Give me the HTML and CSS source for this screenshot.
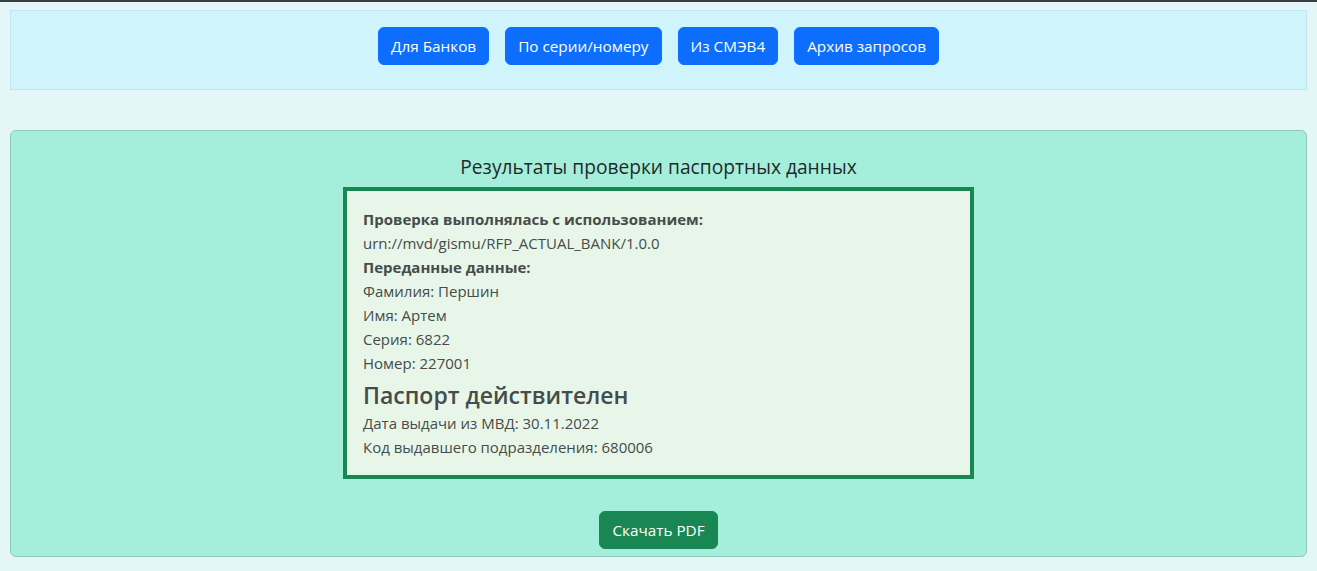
FILE: index.html
```html
<!DOCTYPE html>
<html lang="ru">
<head>
<meta charset="utf-8">
<title>Проверка паспорта</title>
<link rel="stylesheet" href="styles.css">
</head>
<body>
<div class="page">
  <nav class="nav-box">
    <button class="btn btn-primary">Для Банков</button>
    <button class="btn btn-primary">По серии/номеру</button>
    <button class="btn btn-primary">Из СМЭВ4</button>
    <button class="btn btn-primary">Архив запросов</button>
  </nav>
  <section class="card">
    <h5 class="card-title">Результаты проверки паспортных данных</h5>
    <div class="result">
      <div class="line strong">Проверка выполнялась с использованием:</div>
      <div class="line">urn://mvd/gismu/RFP_ACTUAL_BANK/1.0.0</div>
      <div class="line strong">Переданные данные:</div>
      <div class="line">Фамилия: Першин</div>
      <div class="line">Имя: Артем</div>
      <div class="line">Серия: 6822</div>
      <div class="line">Номер: 227001</div>
      <h4 class="verdict">Паспорт действителен</h4>
      <div class="line">Дата выдачи из МВД: 30.11.2022</div>
      <div class="line">Код выдавшего подразделения: 680006</div>
    </div>
    <button class="btn btn-success">Скачать PDF</button>
  </section>
</div>
</body>
</html>
```
FILE: styles.css
```css
* { box-sizing: border-box; }
html, body { margin: 0; padding: 0; }
body {
  background: #e5f6f9;
  border-top: 2px solid #3a3f44;
  font-family: "Open Sans", "Noto Sans", sans-serif;
  color: #212529;
  min-height: 571px;
}
.page {
  padding: 8px 10px 0 10px;
  display: flex;
  flex-direction: column;
  gap: 40px;
}
.nav-box {
  background: #cff4fc;
  border: 1px solid #bfe6ee;
  padding: 16px 0 24px;
  display: flex;
  justify-content: center;
  gap: 16px;
}
.btn {
  font-family: inherit;
  font-size: 15.3px;
  line-height: 24px;
  padding: 6px 12px;
  border: 1px solid transparent;
  border-radius: 6px;
  color: #fff;
  cursor: pointer;
  height: 38px;
}
.btn-primary { background: #0d6efd; border-color: #0d6efd; }
.btn-success { background: #198754; border-color: #198754; }
.card {
  background: #a6eedc;
  border: 1px solid #8cc9b9;
  border-radius: 6px;
  padding: 24px 0 7px;
  display: flex;
  flex-direction: column;
  align-items: center;
}
.card-title {
  margin: 0 0 8px;
  font-size: 19.2px;
  font-weight: 500;
  line-height: 24px;
  color: #1f2a27;
}
.result {
  width: 631px;
  border: 4px solid #198754;
  background: #e8f6ea;
  padding: 16px;
  color: #454c49;
  font-size: 15px;
  line-height: 24px;
}
.line.strong { font-weight: 700; }
.verdict {
  margin: 6px 0 1px;
  font-size: 23px;
  line-height: 29px;
  font-weight: 600;
}
.btn-success { margin-top: 32px; }
```
